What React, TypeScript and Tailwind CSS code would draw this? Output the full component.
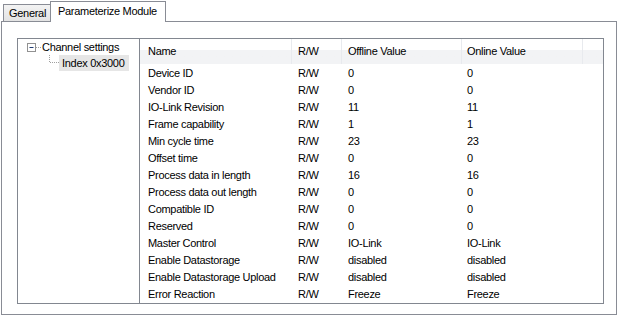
import React from "react";

interface Param {
  name: string;
  access: string;
  offline: string;
  online: string;
}

const params: Param[] = [
  { name: "Device ID", access: "R/W", offline: "0", online: "0" },
  { name: "Vendor ID", access: "R/W", offline: "0", online: "0" },
  { name: "IO-Link Revision", access: "R/W", offline: "11", online: "11" },
  { name: "Frame capability", access: "R/W", offline: "1", online: "1" },
  { name: "Min cycle time", access: "R/W", offline: "23", online: "23" },
  { name: "Offset time", access: "R/W", offline: "0", online: "0" },
  { name: "Process data in length", access: "R/W", offline: "16", online: "16" },
  { name: "Process data out length", access: "R/W", offline: "0", online: "0" },
  { name: "Compatible ID", access: "R/W", offline: "0", online: "0" },
  { name: "Reserved", access: "R/W", offline: "0", online: "0" },
  { name: "Master Control", access: "R/W", offline: "IO-Link", online: "IO-Link" },
  { name: "Enable Datastorage", access: "R/W", offline: "disabled", online: "disabled" },
  { name: "Enable Datastorage Upload", access: "R/W", offline: "disabled", online: "disabled" },
  { name: "Error Reaction", access: "R/W", offline: "Freeze", online: "Freeze" },
];

const headerCell = "h-full flex items-center border-r border-[#e8eaee]";

const App: React.FC = () => {
  return (
    <div className="w-[618px] h-[316px] bg-white font-['Liberation_Sans',Arial,sans-serif] text-[11px] tracking-[-0.3px] text-black overflow-hidden">
      {/* Tabs */}
      <div className="h-[21px] flex items-end pl-[3px]">
        <div className="w-[48px] h-[17px] pl-[5px] flex items-center border border-b-0 border-[#898c95] bg-gradient-to-b from-[#f3f3f3] to-[#e3e3e3]">
          General
        </div>
        <div className="relative z-10 -ml-px -mb-px w-[116px] h-[21px] pl-[7px] pb-[1px] flex items-center border border-b-0 border-[#898c95] bg-white">
          Parameterize Module
        </div>
      </div>

      {/* Tab page */}
      <div className="ml-[1px] w-[616px] h-[294px] border border-[#898c95] bg-white">
        <div className="ml-[15px] mt-[16px] w-[587px] h-[266px] border border-[#828790] flex">
          {/* Tree */}
          <div className="w-[122px] h-full border-r border-[#828790] flex flex-col">
            <div className="h-[16px] flex items-center pl-[9px]">
              <svg width="15" height="16" className="shrink-0">
                <rect x="0.5" y="4.5" width="8" height="8" fill="white" stroke="#919191" />
                <line x1="2.5" y1="8.5" x2="6.5" y2="8.5" stroke="#1f3b73" />
                <line x1="9" y1="8.5" x2="14" y2="8.5" stroke="#a0a0a0" strokeDasharray="1 1" />
              </svg>
              <span className="whitespace-nowrap">Channel settings</span>
            </div>
            <div className="h-[16px] flex items-center pl-[9px]">
              <svg width="32" height="16" className="shrink-0">
                <line x1="22.5" y1="0" x2="22.5" y2="8" stroke="#a0a0a0" strokeDasharray="1 1" />
                <line x1="23" y1="7.5" x2="32" y2="7.5" stroke="#a0a0a0" strokeDasharray="1 1" />
              </svg>
              <span className="h-[16px] w-[70px] pl-[3px] flex items-center bg-[#e6e6e6] whitespace-nowrap">
                Index 0x3000
              </span>
            </div>
          </div>

          {/* List view */}
          <div className="flex-1 flex flex-col">
            <div className="h-[25px] flex bg-gradient-to-b from-white from-45% to-[#f2f3f5] to-45%">
              <div className={`${headerCell} w-[152px] pl-[8px]`}>Name</div>
              <div className={`${headerCell} w-[50px] pl-[6px]`}>R/W</div>
              <div className={`${headerCell} w-[120px] pl-[6px]`}>Offline Value</div>
              <div className={`${headerCell} w-[121px] pl-[5px]`}>Online Value</div>
              <div className="w-[20px] h-full" />
            </div>
            <div className="pt-[1px]">
              {params.map((p) => (
                <div key={p.name} className="h-[17px] flex items-center whitespace-nowrap">
                  <div className="w-[152px] pl-[8px]">{p.name}</div>
                  <div className="w-[50px] pl-[6px]">{p.access}</div>
                  <div className="w-[120px] pl-[6px]">{p.offline}</div>
                  <div className="w-[121px] pl-[5px]">{p.online}</div>
                </div>
              ))}
            </div>
          </div>
        </div>
      </div>
    </div>
  );
};

export default App;
